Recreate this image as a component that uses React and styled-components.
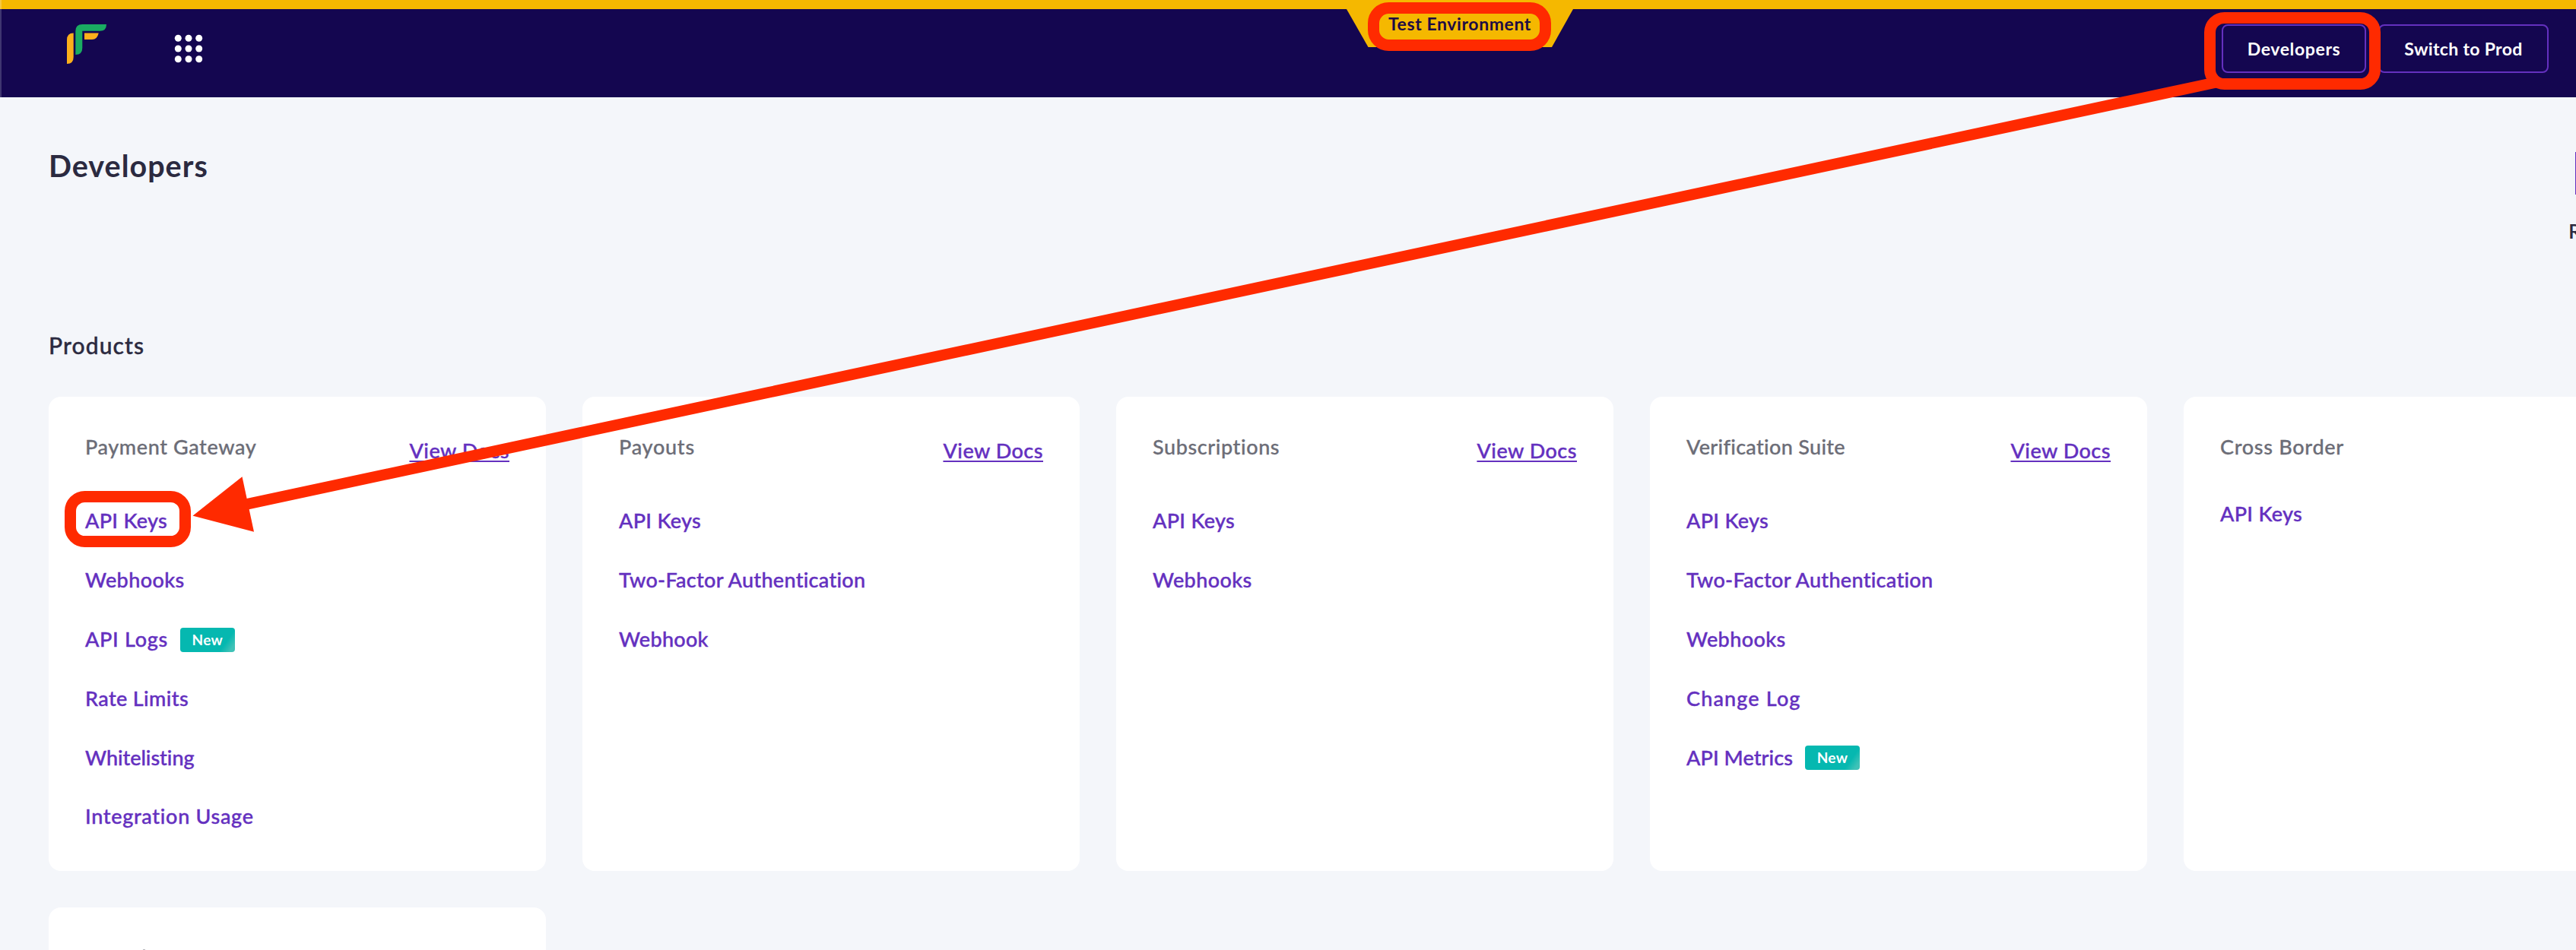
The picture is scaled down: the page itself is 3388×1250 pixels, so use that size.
import React from 'react';
import styled, { createGlobalStyle } from 'styled-components';

const color = {
  page: '#f4f6fa',
  navy: '#140650',
  amber: '#f5b800',
  violet: '#6430bf',
  ink: '#2b2a40',
  muted: '#6c6d77',
  mark: '#ff2a00',
};

const GlobalStyle = createGlobalStyle`
  * { box-sizing: border-box; }
  body {
    margin: 0;
    background: ${color.page};
    font-family: Lato, "Open Sans", sans-serif;
    font-variant-ligatures: none;
  }
`;

const Page = styled.div`
  position: relative;
  width: 100%;
  height: 1250px;
  overflow: hidden;
  background: ${color.page};
`;

const EnvBar = styled.div`
  height: 12px;
  background: ${color.amber};
  border-left: 2px solid #f7c842;
`;

const EnvTab = styled.div`
  position: absolute;
  top: 0;
  left: 1771px;
  width: 298px;
  height: 62px;
  line-height: 62px;
  text-align: center;
  font-size: 23px;
  font-weight: 700;
  letter-spacing: 0.59px;
  color: #1d0b45;
  background: ${color.amber};
  clip-path: polygon(0 0, 100% 0, 100% 12px, 270px 100%, 28.5px 100%, 0 12px);
`;

const NavBar = styled.header`
  display: flex;
  align-items: center;
  justify-content: space-between;
  height: 116px;
  padding: 0 36px 12px 86px;
  background: ${color.navy};
  border-left: 2px solid #3f3570;
`;

const Brand = styled.div`
  display: flex;
  align-items: center;
  gap: 89px;
`;

const Logo = styled.svg`
  display: block;
  width: 52px;
  height: 52px;
  margin-top: -12px;
`;

const AppsIcon = styled.svg`
  display: block;
  width: 38px;
  height: 38px;
`;

const NavActions = styled.div`
  display: flex;
  gap: 16px;
`;

const NavButton = styled.button`
  width: ${(p) => p.$width}px;
  height: 64px;
  padding: 0 0 1px;
  border: 2px solid #6430bf;
  border-radius: 8px;
  background: transparent;
  color: #fff;
  font-family: inherit;
  font-size: 23px;
  font-weight: 700;
  letter-spacing: ${(p) => p.$tracking}px;
`;

const Main = styled.main`
  padding: 64px 0 0 64px;
`;

const TitleRow = styled.div`
  display: flex;
  justify-content: space-between;
  height: 242px;
`;

const PageTitle = styled.h1`
  margin: 0;
  font-size: 39.5px;
  line-height: 51px;
  font-weight: 700;
  letter-spacing: 1px;
  color: ${color.ink};
`;

const Shortcut = styled.div`
  flex: none;
  width: 10px;
  padding-top: 8px;
  overflow: hidden;
  display: flex;
  flex-direction: column;
  align-items: flex-end;
`;

const ShortcutTile = styled.div`
  width: 1px;
  height: 56px;
  background: ${color.violet};
  box-shadow: 0 4px 8px rgba(40, 30, 90, 0.14);
`;

const ShortcutLabel = styled.span`
  align-self: flex-start;
  margin-top: 30px;
  font-size: 27px;
  line-height: 36px;
  font-weight: 600;
  color: ${color.ink};
`;

const SectionTitle = styled.h2`
  margin: 0 0 48px;
  font-size: 30px;
  line-height: 40px;
  font-weight: 500;
  letter-spacing: 1.1px;
  -webkit-text-stroke: 0.4px currentColor;
  color: ${color.ink};
`;

const CardGrid = styled.div`
  display: grid;
  grid-template-columns: repeat(5, 654px);
  grid-auto-rows: 624px;
  gap: 48px;
`;

const Card = styled.section`
  padding: 49px 48px 47px;
  border-radius: 16px;
  background: #fff;
`;

const CardHeader = styled.div`
  display: flex;
  align-items: flex-start;
  justify-content: space-between;
  margin-bottom: 32.6px;
`;

const CardTitle = styled.h3`
  margin: 0;
  font-size: 27px;
  line-height: 34px;
  font-weight: 500;
  letter-spacing: ${(p) => p.$tracking}px;
  -webkit-text-stroke: 0.3px currentColor;
  color: ${color.muted};
`;

const DocsLink = styled.a`
  margin: 4.7px 0 4.3px;
  font-size: 27px;
  line-height: 34px;
  font-weight: 500;
  letter-spacing: 0.5px;
  -webkit-text-stroke: 0.4px currentColor;
  color: ${color.violet};
  text-decoration: underline;
  text-decoration-thickness: 2px;
  text-underline-offset: 3px;
  text-decoration-skip-ink: none;
`;

const LinkList = styled.ul`
  margin: 0;
  padding: 0;
  list-style: none;
`;

const LinkRow = styled.li`
  display: flex;
  align-items: center;
  gap: 16px;
  height: 77.8px;
`;

const ItemLink = styled.a`
  font-size: 27px;
  line-height: 34px;
  font-weight: 500;
  letter-spacing: ${(p) => p.$tracking}px;
  -webkit-text-stroke: 0.4px currentColor;
  color: ${color.violet};
`;

const Badge = styled.span`
  width: 72px;
  height: 32px;
  margin-top: 1px;
  border-radius: 4px;
  text-align: center;
  font-size: 19px;
  line-height: 31px;
  font-weight: 700;
  letter-spacing: 0.3px;
  color: #fff;
  background: linear-gradient(125deg, #05b8b0 78%, #3fc2b7 92%);
`;

const TitleTip = styled.div`
  width: 3px;
  height: 1px;
  margin: 6px 0 0 76px;
  background: #b9b9be;
`;

const Annotations = styled.svg`
  position: absolute;
  top: 0;
  left: 0;
  width: 3388px;
  height: 1250px;
  pointer-events: none;
`;

const products = [
  {
    title: 'Payment Gateway', tracking: 0.6, docs: true,
    links: [
      ['API Keys', 0.31], ['Webhooks', 0.39], ['API Logs', 0.69, true],
      ['Rate Limits', 0.38], ['Whitelisting', -0.03], ['Integration Usage', 0.7],
    ],
  },
  {
    title: 'Payouts', tracking: 0.75, docs: true,
    links: [['API Keys', 0.31], ['Two-Factor Authentication', 0.3], ['Webhook', 0.3]],
  },
  {
    title: 'Subscriptions', tracking: 0.6, docs: true,
    links: [['API Keys', 0.31], ['Webhooks', 0.39]],
  },
  {
    title: 'Verification Suite', tracking: 0.32, docs: true,
    links: [
      ['API Keys', 0.31], ['Two-Factor Authentication', 0.3], ['Webhooks', 0.39],
      ['Change Log', 1.15], ['API Metrics', 0.08, true],
    ],
  },
  { title: 'Cross Border', tracking: 0.71, docs: false, links: [['API Keys', 0.31]] },
];

function ProductCard({ title, tracking, docs, links }) {
  return (
    <Card>
      <CardHeader>
        <CardTitle $tracking={tracking}>{title}</CardTitle>
        {docs && <DocsLink>View Docs</DocsLink>}
      </CardHeader>
      <LinkList>
        {links.map(([label, spacing, isNew]) => (
          <LinkRow key={label}>
            <ItemLink $tracking={spacing}>{label}</ItemLink>
            {isNew && <Badge>New</Badge>}
          </LinkRow>
        ))}
      </LinkList>
    </Card>
  );
}

const dots = [6.3, 20, 33.7];

export default function App() {
  return (
    <Page>
      <GlobalStyle />
      <EnvBar />
      <EnvTab>Test Environment</EnvTab>
      <NavBar>
        <Brand>
          <Logo viewBox="0 0 52 52">
            <path fill="#fdb01b" d="M0 52V20.500Q0 11.500 8.700 11.500V43Q8.700 52 0 52Z" />
            <path fill="#1aac62" d="M11.300 40V9Q11.300 0 20.300 0H52Q52 8.700 43.500 8.700H20.300V31Q20.300 40 11.300 40Z" />
            <path fill="#fdb01b" d="M23 11.500H41.700Q40 20 33 20H23Z" />
          </Logo>
          <AppsIcon viewBox="1 1 38 38">
            {dots.map((y) => dots.map((x) => (
              <circle key={`${x}-${y}`} cx={x} cy={y} r="4.5" fill="#fff" />
            )))}
          </AppsIcon>
        </Brand>
        <NavActions>
          <NavButton $width={190} $tracking={0.63}>Developers</NavButton>
          <NavButton $width={224} $tracking={0.34}>Switch to Prod</NavButton>
        </NavActions>
      </NavBar>

      <Main>
        <TitleRow>
          <PageTitle>Developers</PageTitle>
          <Shortcut>
            <ShortcutTile />
            <ShortcutLabel>R</ShortcutLabel>
          </Shortcut>
        </TitleRow>
        <SectionTitle>Products</SectionTitle>
        <CardGrid>
          {products.map((product) => (
            <ProductCard key={product.title} {...product} />
          ))}
          <Card>
            <TitleTip />
          </Card>
        </CardGrid>
      </Main>

      <Annotations viewBox="0 0 3388 1250">
        <g fill="none" stroke={color.mark} strokeWidth="15">
          <rect x="1806.500" y="10.500" width="226" height="49" rx="20" />
          <rect x="2906.500" y="23.500" width="217" height="87" rx="19" />
          <rect x="92.500" y="653.500" width="151" height="59" rx="19" />
          <path d="M2914 108.500L320 664.400" strokeWidth="14.500" />
        </g>
        <path fill={color.mark} d="M253.500 678.700L318.500 627.300L334 699.700Z" />
      </Annotations>
    </Page>
  );
}
